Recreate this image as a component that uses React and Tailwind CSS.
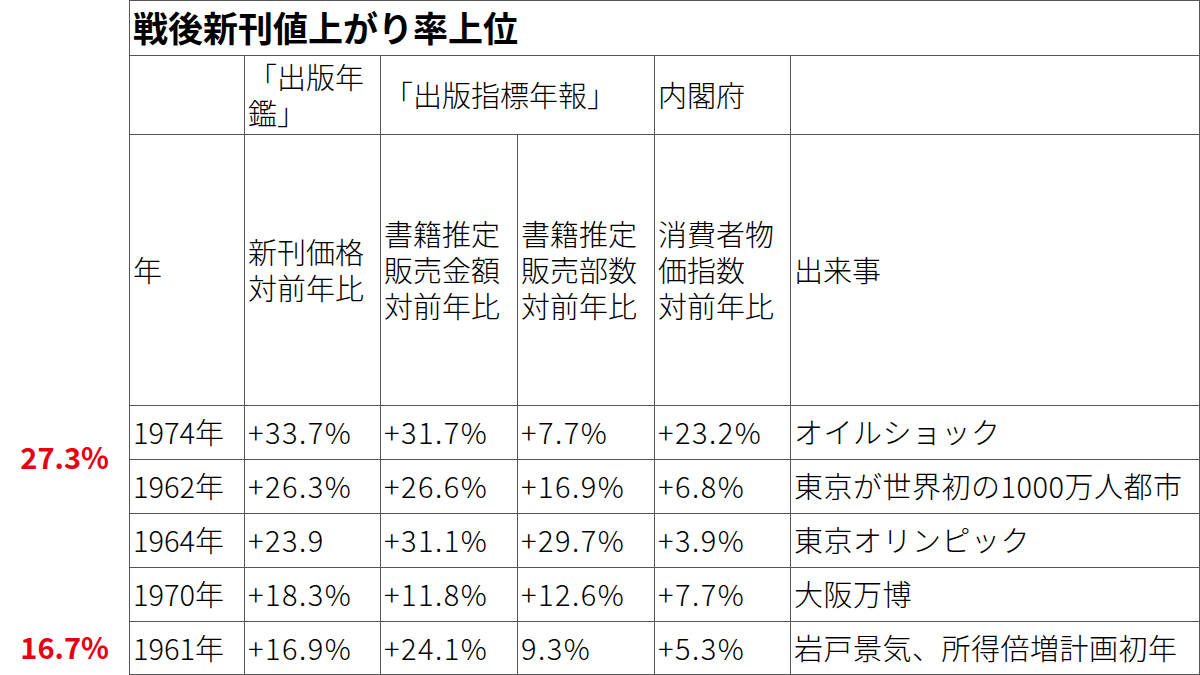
export default function App() {
  const rows = [
    ['1974年', '+33.7%', '+31.7%', '+7.7%', '+23.2%', 'オイルショック'],
    ['1962年', '+26.3%', '+26.6%', '+16.9%', '+6.8%', '東京が世界初の1000万人都市'],
    ['1964年', '+23.9', '+31.1%', '+29.7%', '+3.9%', '東京オリンピック'],
    ['1970年', '+18.3%', '+11.8%', '+12.6%', '+7.7%', '大阪万博'],
    ['1961年', '+16.9%', '+24.1%', '9.3%', '+5.3%', '岩戸景気、所得倍増計画初年'],
  ];
  const cell = 'border border-[#555] px-[3px] pb-[3px] align-middle text-left';

  return (
    <div
      className="flex w-[1200px] h-[675px] bg-white text-black overflow-hidden"
      style={{ fontFamily: '"Noto Sans CJK JP", "Noto Sans", sans-serif' }}
    >
      <div className="w-[129px] shrink-0 flex flex-col items-end pr-[20px] text-[#e60012] font-bold text-[29px] leading-[40px]">
        <div className="mt-[436px]">27.3%</div>
        <div className="mt-[150px]">16.7%</div>
      </div>
      <table className="table-fixed border-collapse w-[1070px] text-[29px] leading-[36px] font-light">
        <colgroup>
          <col className="w-[115px]" />
          <col className="w-[136px]" />
          <col className="w-[137px]" />
          <col className="w-[137px]" />
          <col className="w-[136px]" />
          <col className="w-[409px]" />
        </colgroup>
        <tbody>
          <tr className="h-[55px]">
            <td colSpan={6} className={`${cell} font-bold text-[35px] leading-[40px]`}>
              戦後新刊値上がり率上位
            </td>
          </tr>
          <tr className="h-[79px]">
            <td className={cell}></td>
            <td className={cell}>「出版年鑑」</td>
            <td colSpan={2} className={cell}>「出版指標年報」</td>
            <td className={cell}>内閣府</td>
            <td className={cell}></td>
          </tr>
          <tr className="h-[271px]">
            <td className={cell}>年</td>
            <td className={cell}>新刊価格<br />対前年比</td>
            <td className={cell}>書籍推定<br />販売金額<br />対前年比</td>
            <td className={cell}>書籍推定<br />販売部数<br />対前年比</td>
            <td className={cell}>消費者物<br />価指数<br />対前年比</td>
            <td className={cell}>出来事</td>
          </tr>
          {rows.map((r, i) => (
            <tr key={i} className={i === 4 ? 'h-[53px]' : 'h-[54px]'}>
              {r.map((v, j) => (
                <td
                  key={j}
                  className={`${cell} whitespace-nowrap ${j === 0 ? '' : j === 5 ? 'tracking-[0.5px]' : 'tracking-[1.5px]'}`}
                >
                  {v}
                </td>
              ))}
            </tr>
          ))}
        </tbody>
      </table>
    </div>
  );
}
